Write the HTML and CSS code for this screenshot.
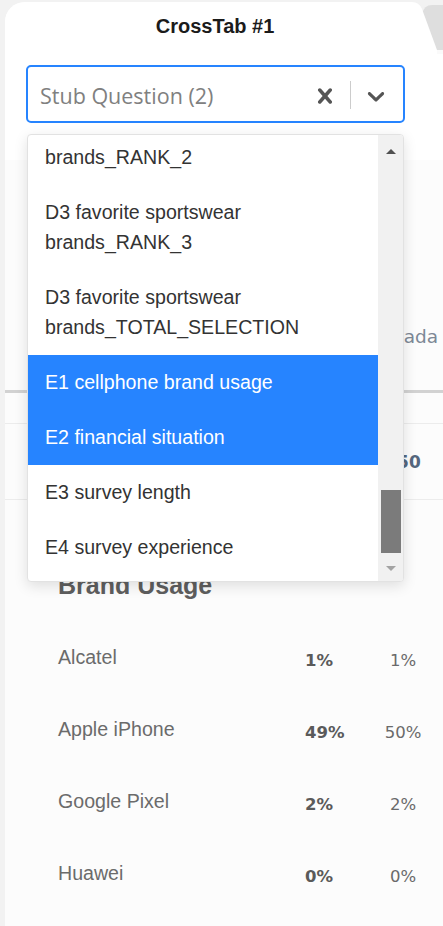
FILE: index.html
```html
<!DOCTYPE html>
<html lang="en">
<head>
<meta charset="utf-8">
<title>CrossTab #1</title>
<link rel="stylesheet" href="styles.css">
</head>
<body>
<div class="card">
  <div class="top">
    <div class="tabbar">
      <h1 class="tab-title">CrossTab #1</h1>
      <svg class="tab-edge" width="43" height="54" viewBox="0 0 43 54" aria-hidden="true">
        <rect x="0" y="0" width="43" height="54" fill="#f2f2f2"/>
        <path d="M22 14 Q24 5 32 5 L43 5 L43 54 L30 54 Z" fill="#dedede"/>
        <rect x="0" y="50" width="43" height="4" fill="#fafafa"/>
        <path d="M0 2 L12 2 Q19 2 22 9 L37 50 L37 54 L0 54 Z" fill="#ffffff"/>
      </svg>
    </div>
    <div class="picker">
      <div class="select">
        <span class="placeholder">Stub Question (2)</span>
        <span class="ind clear">
          <svg width="30" height="30" viewBox="0 0 20 20" aria-hidden="true"><path fill="#555" d="M14.348 14.849c-0.469 0.469-1.229 0.469-1.697 0l-2.651-3.030-2.651 3.029c-0.469 0.469-1.229 0.469-1.697 0-0.469-0.469-0.469-1.229 0-1.697l2.758-3.15-2.759-3.152c-0.469-0.469-0.469-1.228 0-1.697s1.228-0.469 1.697 0l2.652 3.031 2.651-3.031c0.469-0.469 1.228-0.469 1.697 0s0.469 1.229 0 1.697l-2.758 3.152 2.758 3.15c0.469 0.469 0.469 1.229 0 1.698z"/></svg>
        </span>
        <span class="sep"></span>
        <span class="ind chev">
          <svg width="28" height="28" viewBox="0 0 20 20" aria-hidden="true"><path fill="#555" d="M4.516 7.548c0.436-0.446 1.043-0.481 1.576 0l3.908 3.747 3.908-3.747c0.533-0.481 1.141-0.446 1.574 0 0.436 0.445 0.408 1.197 0 1.615-0.406 0.418-4.695 4.502-4.695 4.502-0.217 0.223-0.502 0.335-0.787 0.335s-0.57-0.112-0.789-0.335c0 0-4.287-4.084-4.695-4.502s-0.436-1.17 0-1.615z"/></svg>
        </span>
      </div>
      <div class="menu">
        <div class="menu-list">
          <div class="opt partial">brands_RANK_2</div>
          <div class="opt">D3 favorite sportswear<br>brands_RANK_3</div>
          <div class="opt">D3 favorite sportswear<br>brands_TOTAL_SELECTION</div>
          <div class="opt sel">E1 cellphone brand usage</div>
          <div class="opt sel">E2 financial situation</div>
          <div class="opt">E3 survey length</div>
          <div class="opt">E4 survey experience</div>
        </div>
        <div class="scrollbar">
          <div class="sb-btn"><span class="arr-up"></span></div>
          <div class="sb-track"><div class="sb-thumb"></div></div>
          <div class="sb-btn"><span class="arr-down"></span></div>
        </div>
      </div>
    </div>
  </div>
  <div class="content">
    <div class="trow head"><span></span><span></span><span class="c2">Canada</span></div>
    <div class="trow spacer"></div>
    <div class="trow base"><span></span><span></span><span class="c2">150</span></div>
    <h2 class="section">Brand Usage</h2>
    <div class="trow data"><span class="lbl">Alcatel</span><span class="v1">1%</span><span class="c2 v2">1%</span></div>
    <div class="trow data"><span class="lbl">Apple iPhone</span><span class="v1">49%</span><span class="c2 v2">50%</span></div>
    <div class="trow data"><span class="lbl">Google Pixel</span><span class="v1">2%</span><span class="c2 v2">2%</span></div>
    <div class="trow data"><span class="lbl">Huawei</span><span class="v1">0%</span><span class="c2 v2">0%</span></div>
  </div>
</div>
</body>
</html>
```
FILE: styles.css
```css
html, body {
  margin: 0;
  padding: 0;
}
body {
  background: #f2f2f2;
  overflow: hidden;
  height: 926px;
  font-family: "Liberation Sans", Arial, sans-serif;
}
.card {
  position: relative;
  margin: 2px 0 0 5px;
  background: #fcfcfc;
  border-top-left-radius: 20px;
  min-height: 924px;
}
.top {
  background: #fff;
  border-top-left-radius: 20px;
  padding-bottom: 37px;
}
.tabbar {
  position: relative;
  height: 50px;
}
.tab-title {
  margin: 0;
  padding: 12px 18px 0 0;
  text-align: center;
  font-size: 20px;
  line-height: 24px;
  font-weight: bold;
  color: #1b1b1b;
}
.tab-edge {
  position: absolute;
  top: -2px;
  right: 0;
  display: block;
}
.picker {
  position: relative;
  margin: 13px 0 0 21px;
  width: 379px;
}
.select {
  box-sizing: border-box;
  height: 58px;
  border: 2px solid #2684ff;
  border-radius: 5px;
  background: #fff;
  display: flex;
  align-items: center;
  padding-right: 6px;
}
.placeholder {
  flex: 1;
  padding-left: 12px;
  padding-top: 2px;
  font-family: "Open Sans", "DejaVu Sans", sans-serif;
  font-size: 21.5px;
  color: #808080;
  white-space: nowrap;
}
.ind {
  display: flex;
  align-items: center;
  justify-content: center;
  padding-top: 3px;
}
.ind svg { display: block; }
.clear { width: 40px; }
.chev { width: 42px; }
.sep {
  width: 1px;
  height: 28px;
  background: #cccccc;
  margin: 1px 4px 0 5px;
}
.menu {
  position: absolute;
  z-index: 2;
  top: 69px;
  left: 1px;
  width: 377px;
  height: 448px;
  box-sizing: border-box;
  border: 1px solid #e2e2e2;
  border-radius: 4px;
  background: #fff;
  box-shadow: 0 4px 14px rgba(0, 0, 0, 0.12);
  display: flex;
  overflow: hidden;
}
.menu-list {
  flex: 1;
  overflow: hidden;
  padding-top: 5px;
}
.opt {
  padding: 12px 17px 13px;
  font-size: 19.6px;
  line-height: 30px;
  color: #333;
  white-space: nowrap;
}
.opt.partial {
  padding-top: 2px;
}
.opt.sel {
  background: #2684ff;
  color: #fff;
}
.scrollbar {
  width: 25px;
  background: #f1f1f1;
  display: flex;
  flex-direction: column;
}
.sb-btn {
  height: 28px;
  display: flex;
  align-items: center;
  justify-content: center;
}
.arr-up {
  width: 0;
  height: 0;
  border-left: 5px solid transparent;
  border-right: 5px solid transparent;
  border-bottom: 5px solid #505050;
  margin-top: 4px;
}
.arr-down {
  width: 0;
  height: 0;
  border-left: 5px solid transparent;
  border-right: 5px solid transparent;
  border-top: 5px solid #a3a3a3;
  margin-top: 2px;
}
.sb-track {
  flex: 1;
  display: flex;
  flex-direction: column;
  justify-content: flex-end;
}
.sb-thumb {
  height: 63px;
  margin: 0 2px 0 3px;
  background: #7b7b7b;
}
.content {
  background: #fcfcfc;
}
.trow {
  display: grid;
  grid-template-columns: 1fr 70px 56px;
  padding: 0 12px 0 53px;
}
.c2 {
  display: flex;
  justify-content: center;
  white-space: nowrap;
}
.head {
  height: 233px;
  align-items: end;
  padding-bottom: 40px;
  box-sizing: border-box;
  border-bottom: 3px solid #d2d2d2;
  font-family: "DejaVu Sans", sans-serif;
  font-size: 18.5px;
  line-height: 26px;
  color: #7d8896;
}
.spacer {
  height: 30px;
  border-bottom: 1px solid #ececec;
}
.base {
  height: 75px;
  align-items: center;
  border-bottom: 1px solid #ececec;
  font-family: "DejaVu Sans", sans-serif;
  font-weight: bold;
  font-size: 17px;
  color: #55677e;
}
.section {
  margin: 70px 0 21px 53px;
  font-size: 25px;
  line-height: 30px;
  font-weight: bold;
  color: #5e5e5e;
}
.data {
  height: 72px;
  align-items: center;
}
.data .lbl {
  font-size: 19.6px;
  line-height: 30px;
  color: #6b6b6b;
}
.v1, .v2 {
  font-family: "DejaVu Sans", sans-serif;
  font-size: 16.5px;
  line-height: 22px;
  padding-top: 8px;
}
.v1 {
  font-weight: bold;
  color: #5a5a5a;
}
.v2 {
  color: #6a6a6a;
}
```
